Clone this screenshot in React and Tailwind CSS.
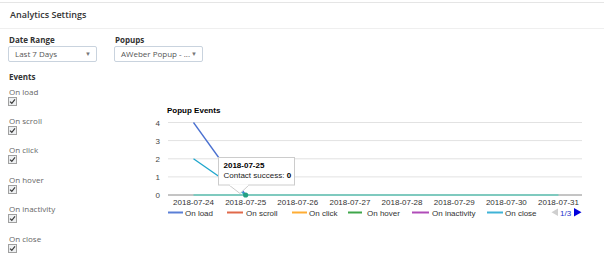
import React from "react";

const events = ["On load", "On scroll", "On click", "On hover", "On inactivity", "On close"];

function Check() {
  return (
    <span className="ml-[-1px] flex h-[9px] w-[9px] items-center justify-center border border-[#a0a0a0] bg-[#eef0f2]">
      <svg width="7" height="7" viewBox="0 0 7 7">
        <path d="M1 3.6 L2.8 5.3 L6 1.4" fill="none" stroke="#3a3a3a" strokeWidth="1.2" />
      </svg>
    </span>
  );
}

function Select({ label }) {
  return (
    <div className="flex h-[16px] w-[89px] items-center justify-between rounded-[2px] border border-[#c9d3de] bg-white pl-[6px] pr-[5px] text-[8px] leading-[10px] text-[#555]">
      <span>{label}</span>
      <span className="text-[6px] text-[#777]">▼</span>
    </div>
  );
}

const legend = [
  { x1: 18, x2: 33, tx: 35, c: "#5a7fd6", t: "On load" },
  { x1: 77, x2: 93, tx: 96, c: "#e0694a", t: "On scroll" },
  { x1: 142, x2: 157, tx: 159, c: "#ffad33", t: "On click" },
  { x1: 198, x2: 212, tx: 217, c: "#3fa64a", t: "On hover" },
  { x1: 262, x2: 279, tx: 282, c: "#b04cb8", t: "On inactivity" },
  { x1: 337, x2: 353, tx: 355, c: "#3fb3d6", t: "On close" },
];

const dates = ["2018-07-24", "2018-07-25", "2018-07-26", "2018-07-27", "2018-07-28", "2018-07-29", "2018-07-30", "2018-07-31"];

function Chart() {
  const gy = [22.5, 40.6, 58.8, 76.9, 95];
  const px = (i) => 43.5 + 52.14 * i;
  return (
    <svg width="450" height="125" viewBox="0 0 450 125" style={{ fontFamily: '"Liberation Sans", Arial, sans-serif' }}>
      <text x="17" y="12.5" fontSize="8" fontWeight="bold" fill="#000">Popup Events</text>
      {gy.slice(0, 4).map((y, i) => (
        <line key={i} x1="18" x2="432" y1={y} y2={y} stroke="#e2e2e2" strokeWidth="1" />
      ))}
      {["4", "3", "2", "1", "0"].map((t, i) => (
        <text key={t} x="10" y={gy[i] + 3} fontSize="8" textAnchor="end" fill="#444">{t}</text>
      ))}
      <line x1="18" x2="432" y1="95" y2="95" stroke="#8a8a8a" strokeWidth="1" />
      <line x1={px(0)} x2={px(7)} y1="95" y2="95" stroke="#7fcabf" strokeWidth="2" />
      <line x1={px(0)} y1="22.5" x2={px(1)} y2="95" stroke="#4a70d0" strokeWidth="1.3" />
      <line x1={px(0)} y1="58.8" x2={px(1)} y2="95" stroke="#1ea6cc" strokeWidth="1.3" />
      <circle cx={px(1)} cy="95" r="2.6" fill="#25a083" />
      {dates.map((d, i) => (
        <text key={d} x={px(i)} y="104.5" fontSize="8" textAnchor="middle" fill="#333">{d}</text>
      ))}
      {legend.map((l) => (
        <g key={l.t}>
          <line x1={l.x1} x2={l.x2} y1="112.5" y2="112.5" stroke={l.c} strokeWidth="2" />
          <text x={l.tx} y="115.5" fontSize="8" fill="#333">{l.t}</text>
        </g>
      ))}
      <polygon points="408,108.5 408,116 401.5,112.2" fill="#cfcfcf" />
      <text x="410" y="115.5" fontSize="8" fill="#2233cc">1/3</text>
      <polygon points="424,108 424,116.5 431.5,112.2" fill="#0000dd" />
      <g>
        <rect x="68.5" y="57.5" width="76" height="27.5" fill="#fff" stroke="#cccccc" strokeWidth="1" />
        <path d="M79 85 L90 93.5 L99 85" fill="#fff" stroke="#cccccc" strokeWidth="1" />
        <line x1="79.6" x2="98.4" y1="85" y2="85" stroke="#fff" strokeWidth="1.4" />
        <text x="73.5" y="68" fontSize="8" fontWeight="bold" fill="#000">2018-07-25</text>
        <text x="73.5" y="78" fontSize="8" fill="#222">
          Contact success: <tspan fontWeight="bold" fill="#000">0</tspan>
        </text>
      </g>
    </svg>
  );
}

export default function App() {
  return (
    <div className="h-[263px] w-[614px] overflow-hidden bg-white" style={{ fontFamily: '"Open Sans", "Noto Sans", sans-serif' }}>
      <div className="mt-[2px] w-[604px] border-t border-[#e5e5e5]">
        <div className="flex h-[26px] items-center border-b border-[#efefef] pb-[2px] pl-[10px] text-[9px] font-semibold text-[#333]">
          Analytics Settings
        </div>
        <div className="pl-[9px]">
          <div className="mt-[6px] flex gap-[18px]">
            <div className="flex flex-col">
              <div className="h-[10px] text-[8px] font-bold leading-[10px] text-[#333]">Date Range</div>
              <div className="mt-[1px] ml-[-1px]"><Select label="Last 7 Days" /></div>
            </div>
            <div className="flex flex-col">
              <div className="h-[10px] text-[8px] font-bold leading-[10px] text-[#333]">Popups</div>
              <div className="mt-[1px] ml-[-1px]"><Select label="AWeber Popup - ..." /></div>
            </div>
          </div>
          <div className="mt-[10px] flex">
            <div className="w-[141px]">
              <div className="h-[10px] text-[8px] font-bold leading-[10px] text-[#333]">Events</div>
              <div className="mt-[4.6px] flex flex-col gap-[10.4px]">
                {events.map((e) => (
                  <div key={e} className="flex flex-col">
                    <div className="h-[10px] text-[8px] leading-[10px] text-[#666]">{e}</div>
                    <Check />
                  </div>
                ))}
              </div>
            </div>
            <div className="mt-[28px]">
              <Chart />
            </div>
          </div>
        </div>
      </div>
    </div>
  );
}
